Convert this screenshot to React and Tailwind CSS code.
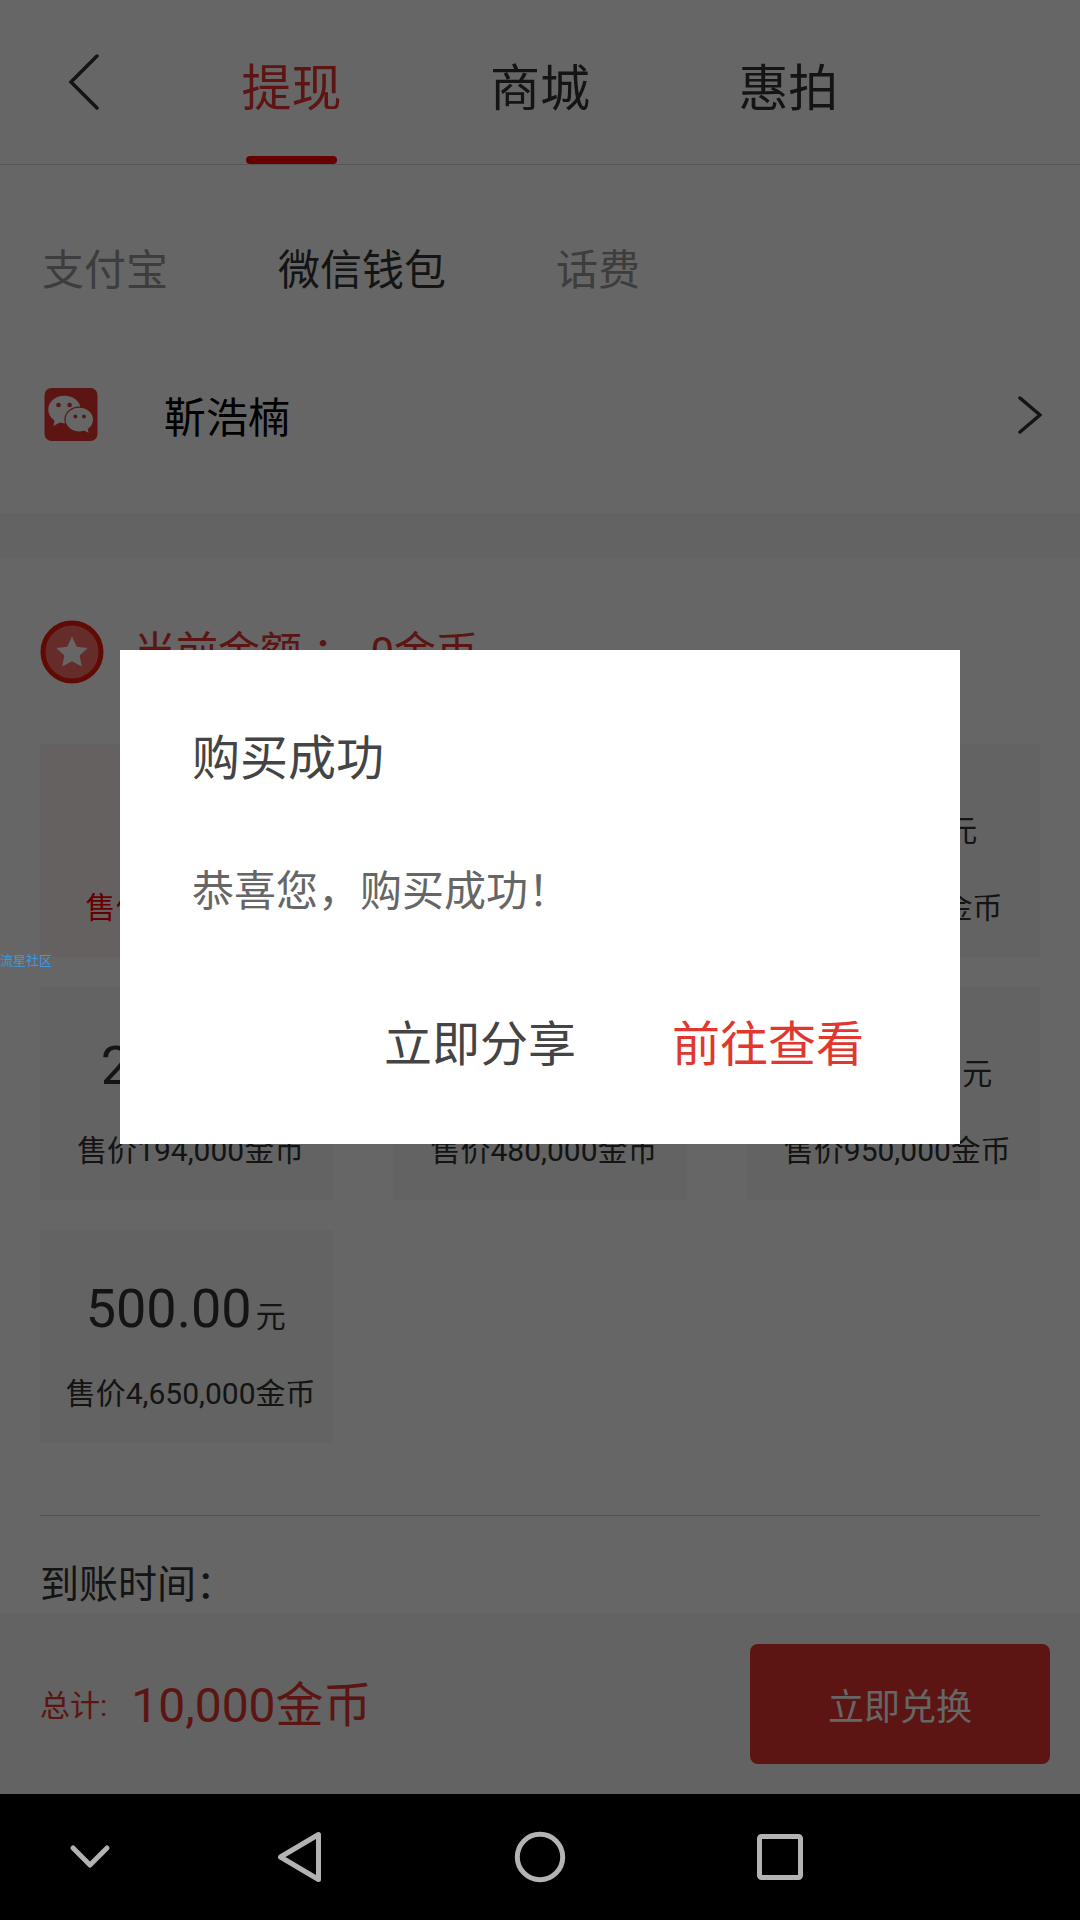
import React from 'react';

const tabs = ['提现', '商城', '惠拍'];

const methods = ['支付宝', '微信钱包', '话费'];

const packages = [
  { amount: '1.00', price: '10,000' },
  { amount: '5.00', price: '49,000' },
  { amount: '10.00', price: '98,000' },
  { amount: '20.00', price: '194,000' },
  { amount: '50.00', price: '480,000' },
  { amount: '100.00', price: '950,000' },
  { amount: '500.00', price: '4,650,000' },
];

const WechatIcon = () => (
  <svg className="w-[54px] h-[54px]" viewBox="0 0 54 54" aria-hidden="true">
    <rect x="0.500" width="53" height="53" rx="7" fill="#e6352d" />
    <path
      d="M20.500 7.800C11.400 7.800 4.300 13.800 4.300 21.500C4.300 26 6.700 29.900 10.500 32.400L9.400 38L15.800 34.600C17.300 35 18.900 35.200 20.500 35.200C29.600 35.200 36.700 29.200 36.700 21.500S29.600 7.800 20.500 7.800Z"
      fill="#fff"
    />
    <path
      d="M35.300 19.200C27.400 19.200 21 24.700 21 31.600S27.400 44 35.300 44C37 44 38.700 43.700 40.200 43.200L45.400 46L44.400 41.200C47.700 38.900 49.600 35.500 49.600 31.600C49.600 24.700 43.200 19.200 35.300 19.200Z"
      fill="#fff"
      stroke="#e6352d"
      strokeWidth="1.200"
    />
    <circle cx="14.500" cy="17" r="2.300" fill="#e6352d" />
    <circle cx="25.600" cy="17" r="2.300" fill="#e6352d" />
    <circle cx="31.300" cy="28.500" r="1.900" fill="#e6352d" />
    <circle cx="40" cy="28.500" r="1.900" fill="#e6352d" />
  </svg>
);

const CoinIcon = () => (
  <svg className="w-16 h-16" viewBox="0 0 64 64" aria-hidden="true">
    <circle cx="32" cy="32" r="29" fill="#ff6f66" stroke="#f01a10" strokeWidth="5" />
    <path
      d="M32 16.500L36.700 26.700L47.700 28L39.600 35.600L41.700 46.600L32 41.200L22.300 46.600L24.400 35.600L16.300 28L27.300 26.700Z"
      fill="#fff"
    />
  </svg>
);

const Header = () => (
  <header className="h-[165px] flex border-b border-[#d9d9d9] text-[50px] leading-none text-[#333]">
    <button className="flex-1 flex items-center justify-center" aria-label="返回">
      <svg className="w-8 h-14" viewBox="0 0 32 56" fill="none" stroke="#333" strokeWidth="3.500" strokeLinecap="round">
        <path d="M29 2L3 28L29 54" />
      </svg>
    </button>
    <nav className="w-[69%] grid grid-cols-3">
      {tabs.map((tab, i) => (
        <button key={tab} className={`flex flex-col items-center justify-end ${i === 0 ? 'text-[#e6352d]' : ''}`}>
          <span className="pb-[42px]">{tab}</span>
          <span className={`w-[91px] h-2 rounded-full ${i === 0 ? 'bg-[#ff0000]' : ''}`} />
        </button>
      ))}
    </nav>
    <div className="flex-1" />
  </header>
);

const PackageCard = ({ amount, price, selected }) => (
  <button
    className={`h-[213px] flex flex-col items-center pt-12 ${
      selected ? 'bg-[#fbf2ef] text-[#ff0000]' : 'bg-[#f7f7f7] text-[#333]'
    }`}
  >
    <span className="flex items-baseline gap-1 pr-0.5 text-[#333]">
      <span className="text-[54px] leading-[62px]">{amount}</span>
      <span className="text-[30px]">元</span>
    </span>
    <span className="mt-[34px] pl-2 text-[30px] leading-10 whitespace-nowrap">售价{price}金币</span>
  </button>
);

const SuccessDialog = () => (
  <div className="absolute inset-0 flex items-center justify-center bg-black/60">
    <div role="dialog" aria-labelledby="dialog-title" className="w-7/9 bg-white pt-[76px] pb-[66px]">
      <h2 id="dialog-title" className="px-[72px] text-[48px] leading-[66px] text-[#444]">
        购买成功
      </h2>
      <p className="mt-[70px] px-[72px] text-[42px] leading-[60px] text-[#666]">恭喜您，购买成功！</p>
      <div className="mt-[90px] px-24 flex justify-end gap-24 text-[48px] leading-[66px]">
        <button className="text-[#444]">立即分享</button>
        <button className="text-[#e0382e]">前往查看</button>
      </div>
    </div>
  </div>
);

const SystemNav = () => (
  <nav className="h-[126px] bg-black grid grid-cols-[3fr_4fr_4fr_4fr_3fr] items-center">
    <button className="flex justify-center" aria-label="收起">
      <svg className="w-14 h-14" viewBox="0 0 56 56" fill="none" stroke="#b3b3b3" strokeWidth="5" strokeLinecap="round" strokeLinejoin="round">
        <path d="M11 19L28 36L45 19" />
      </svg>
    </button>
    <button className="flex justify-center" aria-label="后退">
      <svg className="w-14 h-14" viewBox="0 0 56 56" fill="none" stroke="#b3b3b3" strokeWidth="5" strokeLinejoin="round">
        <path d="M46.500 5.500V50.500L8.500 28Z" />
      </svg>
    </button>
    <button className="flex justify-center" aria-label="主页">
      <svg className="w-14 h-14" viewBox="0 0 56 56" fill="none" stroke="#b3b3b3" strokeWidth="5">
        <circle cx="28" cy="28" r="22.700" />
      </svg>
    </button>
    <button className="flex justify-center" aria-label="最近任务">
      <svg className="w-14 h-14" viewBox="0 0 56 56" fill="none" stroke="#b3b3b3" strokeWidth="5">
        <rect x="7.500" y="7.500" width="41" height="41" rx="2" />
      </svg>
    </button>
  </nav>
);

const App = () => {
  return (
    <div className="min-h-screen flex flex-col bg-white font-['Roboto','Noto_Sans_CJK_SC',sans-serif]">
      <div className="relative flex-1 flex flex-col">
        <Header />

        <div className="px-[42px] pt-[76px] flex gap-[110px] text-[42px] leading-[60px]">
          {methods.map((method, i) => (
            <button key={method} className={i === 1 ? 'text-[#333]' : 'text-[#999]'}>
              {method}
            </button>
          ))}
        </div>

        <button className="mt-[80px] pl-11 pr-[38px] pb-[64px] flex items-center text-left">
          <WechatIcon />
          <span className="flex-1 ml-[66px] pt-2 text-[42px] leading-[60px] text-black">靳浩楠</span>
          <svg className="w-6 h-10" viewBox="0 0 24 40" fill="none" stroke="#333" strokeWidth="3.500" strokeLinecap="round">
            <path d="M2 3L22 20L2 37" />
          </svg>
        </button>

        <div className="h-[45px] bg-[#f7f7f7]" />

        <main className="px-10">
          <div className="mt-[62px] flex items-center text-[42px] leading-[60px] text-[#e6352d]">
            <CoinIcon />
            <span className="ml-[30px] pt-0.5">当前金额 ：</span>
            <span className="ml-4 pt-0.5">0金币</span>
          </div>

          <div className="mt-[60px] grid grid-cols-3 gap-x-[60px] gap-y-[30px]">
            {packages.map((item, i) => (
              <PackageCard key={item.amount} amount={item.amount} price={item.price} selected={i === 0} />
            ))}
          </div>

          <div className="mt-[72px] pt-[42px] border-t border-[#ccc] text-[39px] leading-[54px] text-[#333]">到账时间：</div>
        </main>

        <footer className="mt-auto h-[181px] bg-[#f7f7f7] pl-10 pr-[30px] flex items-center text-[#e6352d]">
          <span className="pt-1 text-[30px]">总计:</span>
          <span className="ml-6 pt-1 text-[48px]">10,000金币</span>
          <button className="ml-auto w-[300px] h-[120px] pt-2 rounded-lg bg-[#e6352d] text-white text-[36px]">立即兑换</button>
        </footer>

        <SuccessDialog />
        <span className="absolute left-0 top-[951px] text-[13px] leading-5 text-[#3a9be0]">流星社区</span>
      </div>

      <SystemNav />
    </div>
  );
};

export default App;
